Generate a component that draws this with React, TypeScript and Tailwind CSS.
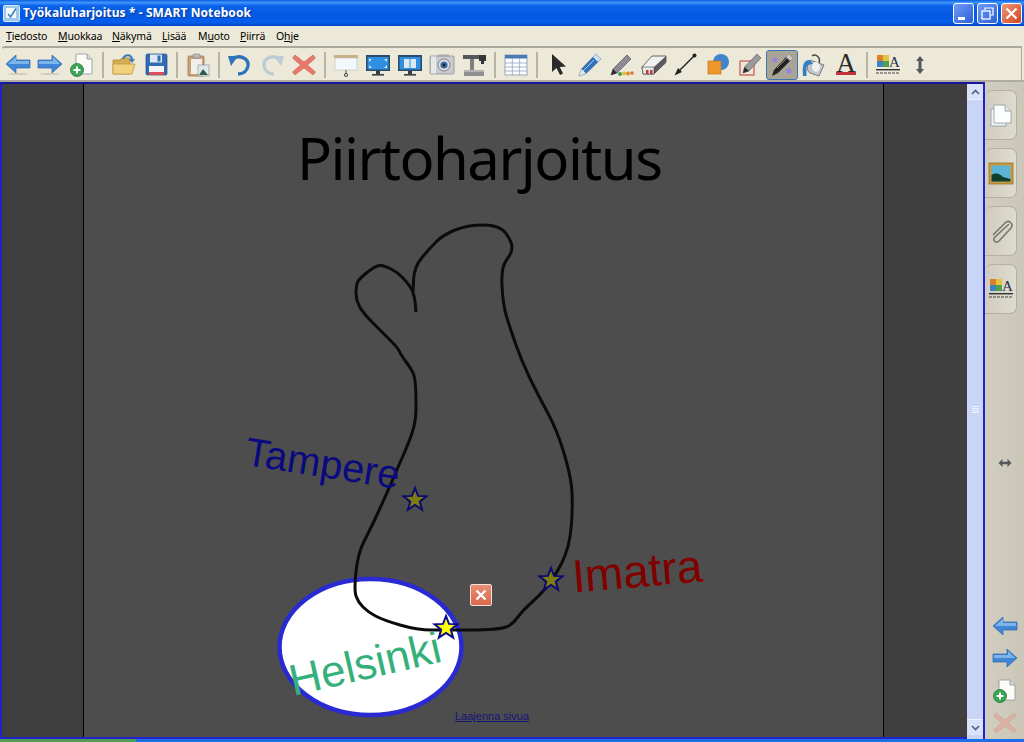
import type { ReactNode } from "react";

const ui = "font-['Noto_Sans','Liberation_Sans',sans-serif]";
const arial = "font-['Liberation_Sans',Arial,sans-serif]";

const outline: [number, number][] = [
  [416, 312], [415, 295], [408, 283], [397, 272], [385, 266], [378, 265], [370, 270], [358, 280],
  [356, 287], [356, 300], [363, 313], [382, 332], [398, 348], [401, 355], [412, 370], [415, 378],
  [416, 395], [416, 420], [410, 440], [398, 467], [387, 493], [370, 530], [358, 553], [354, 590],
  [358, 602], [368, 612], [383, 620], [417, 630], [447, 630], [478, 630], [500, 629], [512, 625],
  [523, 610], [537, 598], [553, 580], [570, 547], [573, 500], [570, 473], [557, 430], [538, 395],
  [522, 362], [510, 328], [503, 305], [501, 267], [512, 253], [512, 242], [500, 225], [467, 225],
  [443, 235], [430, 248], [414, 267], [413, 293],
];

// smooth line through the hand drawn points
function smooth(pts: [number, number][]) {
  let d = `M${pts[0][0]} ${pts[0][1]}`;
  for (let i = 1; i < pts.length - 1; i++) {
    const mx = (pts[i][0] + pts[i + 1][0]) / 2;
    const my = (pts[i][1] + pts[i + 1][1]) / 2;
    d += ` Q${pts[i][0]} ${pts[i][1]} ${mx} ${my}`;
  }
  const last = pts[pts.length - 1];
  return d + ` L${last[0]} ${last[1]}`;
}

function starPoints(cx: number, cy: number, r: number) {
  const out: string[] = [];
  for (let i = 0; i < 10; i++) {
    const rad = i % 2 === 0 ? r : r * 0.42;
    const a = -Math.PI / 2 + (i * Math.PI) / 5;
    out.push(`${(cx + rad * Math.cos(a)).toFixed(1)},${(cy + rad * Math.sin(a)).toFixed(1)}`);
  }
  return out.join(" ");
}

function Icon({ children, size = 26 }: { children: ReactNode; size?: number }) {
  return (
    <svg width={size} height={size} viewBox="0 0 26 26" className="block">
      {children}
    </svg>
  );
}

const ArrowLeft = () => (
  <Icon>
    <ellipse cx="13" cy="22" rx="10" ry="1" fill="#cfccbc" />
    <path d="M1 12 L11 3 L11 8 L25 8 L25 16 L11 16 L11 21 Z" fill="#3f86d6" stroke="#2f66ad" strokeWidth="0.7" />
    <path d="M3 12 L11 5 L11 9 L24 9 L24 12 Z" fill="#7db4ea" />
  </Icon>
);
const ArrowRight = () => (
  <Icon>
    <ellipse cx="13" cy="22" rx="10" ry="1" fill="#cfccbc" />
    <path d="M25 12 L15 3 L15 8 L1 8 L1 16 L15 16 L15 21 Z" fill="#3f86d6" stroke="#2f66ad" strokeWidth="0.7" />
    <path d="M2 9 L16 9 L16 5 L23 12 L2 12 Z" fill="#7db4ea" />
  </Icon>
);
const NewPage = () => (
  <Icon>
    <path d="M7 2 H18 L23 7 V22 H7 Z" fill="#fbfbf8" stroke="#8d9299" strokeWidth="0.8" />
    <path d="M18 2 V7 H23" fill="#d8dbe0" stroke="#8d9299" strokeWidth="0.8" />
    <circle cx="8" cy="18" r="6.5" fill="#3aa655" stroke="#24753a" strokeWidth="0.8" />
    <path d="M8 14.5 V21.5 M4.5 18 H11.5" stroke="#fff" strokeWidth="2" />
  </Icon>
);
const OpenFolder = () => (
  <Icon>
    <path d="M2 8 H9 L11 6 H19 V22 H2 Z" fill="#d9ae52" stroke="#a98535" strokeWidth="0.7" />
    <path d="M2 12 H24 L21 22 H2 Z" fill="#f2d27f" stroke="#b8943f" strokeWidth="0.7" />
    <path d="M12 7 C14 2 20 2 21 7" fill="none" stroke="#3d79b8" strokeWidth="2" />
    <path d="M18 7 L24 7 L21 11 Z" fill="#3d79b8" />
  </Icon>
);
const Save = () => (
  <Icon>
    <rect x="3" y="2" width="21" height="21" rx="1.5" fill="#2f6cb5" stroke="#244f8a" strokeWidth="0.7" />
    <rect x="7" y="2.5" width="12" height="8" fill="#dfe7f2" />
    <rect x="14.5" y="3.5" width="3" height="6" fill="#2f6cb5" />
    <rect x="6" y="14" width="15" height="9" fill="#f4f4f4" />
    <rect x="6" y="20" width="15" height="3" fill="#d8505c" />
  </Icon>
);
const Paste = () => (
  <Icon>
    <rect x="3" y="4" width="16" height="20" rx="1" fill="#c9a377" stroke="#93714a" strokeWidth="0.7" />
    <rect x="6" y="7" width="11" height="15" fill="#f2f0ea" />
    <rect x="8" y="2" width="7" height="4" rx="1" fill="#b9bcb9" stroke="#7f8280" strokeWidth="0.6" />
    <rect x="13" y="13" width="11" height="11" fill="#dfe9ee" stroke="#7f8c92" strokeWidth="0.6" />
    <path d="M14 23 L18 17 L23 23 Z" fill="#2d5f4a" />
  </Icon>
);
const Undo = () => (
  <Icon>
    <path d="M5 7 C12 2 22 6 21 14 C20 19 16 22 11 22" fill="none" stroke="#2f73b8" strokeWidth="3.4" />
    <path d="M1 4 L11 4 L4 14 Z" fill="#2f73b8" />
  </Icon>
);
const Redo = () => (
  <Icon>
    <path d="M21 7 C14 2 4 6 5 14 C6 19 10 22 15 22" fill="none" stroke="#bccdd6" strokeWidth="3.4" />
    <path d="M25 4 L15 4 L22 14 Z" fill="#bccdd6" />
  </Icon>
);
const RedX = ({ faded = false }: { faded?: boolean }) => (
  <Icon>
    <path
      d="M4 3 L13 10 L22 3 L24.5 6 L16.5 13 L24.5 20 L22 23 L13 16 L4 23 L1.5 20 L9.5 13 L1.5 6 Z"
      fill={faded ? "#d9b0a2" : "#e8796a"}
      stroke={faded ? "#cfa596" : "#cf5f52"}
      strokeWidth="0.6"
    />
  </Icon>
);
const ProjectorScreen = () => (
  <Icon>
    <rect x="1" y="3" width="24" height="3" fill="#c9b084" />
    <rect x="2" y="6" width="22" height="12" fill="#f3f8fc" stroke="#b9bdb9" strokeWidth="0.6" />
    <path d="M13 18 V21" stroke="#555" strokeWidth="1" />
    <circle cx="13" cy="23" r="1.6" fill="none" stroke="#444" strokeWidth="1" />
  </Icon>
);
const Monitor = ({ book = false }: { book?: boolean }) => (
  <Icon>
    <rect x="1" y="3" width="24" height="16" fill="#2e4a68" />
    <rect x="2.5" y="5" width="21" height="12.5" fill="#2f8fe0" />
    {book ? (
      <path d="M7 7 H12.5 V16 H7 Z M13.5 7 H19 V16 H13.5 Z" fill="#dfe9f3" />
    ) : (
      <path d="M4 7 L7 7 L4 10 Z M22 7 L19 7 L22 10 Z M4 16 L7 16 L4 13 Z M22 16 L19 16 L22 13 Z" fill="#cfe7fa" />
    )}
    <rect x="11" y="19" width="4" height="3" fill="#3a3f45" />
    <rect x="7" y="22" width="12" height="1.6" fill="#3a3f45" />
  </Icon>
);
const Camera = () => (
  <Icon>
    <rect x="1" y="4" width="24" height="18" rx="1" fill="#c9cbce" stroke="#85878a" strokeWidth="0.7" />
    <rect x="2" y="4.5" width="5" height="17" fill="#e6e7e8" />
    <rect x="9" y="2.5" width="11" height="2" fill="#a8aaad" />
    <circle cx="15" cy="13" r="6" fill="#dcdfe3" stroke="#6f7174" strokeWidth="0.8" />
    <circle cx="15" cy="13" r="3.6" fill="#3c6ea3" />
    <circle cx="15" cy="13" r="1.5" fill="#10202f" />
  </Icon>
);
const DocCamera = () => (
  <Icon>
    <path d="M2 3 H21 V7 H2 Z" fill="#55585a" />
    <rect x="18" y="3" width="7" height="6" fill="#343638" />
    <rect x="20" y="9" width="3" height="3" fill="#343638" />
    <rect x="9" y="7" width="4" height="12" fill="#7c7f80" />
    <rect x="3" y="18" width="20" height="6" rx="1" fill="#8d908f" />
    <rect x="3" y="18" width="20" height="2" fill="#b2b4b3" />
  </Icon>
);
const Table = () => (
  <Icon>
    <rect x="2" y="3" width="22" height="20" fill="#fdfdfd" stroke="#7f93ad" strokeWidth="0.8" />
    <rect x="2" y="3" width="22" height="3.5" fill="#4a7ab5" />
    <path d="M2 11 H24 M2 15 H24 M2 19 H24 M9.3 6 V23 M16.6 6 V23" stroke="#8ea7c6" strokeWidth="0.8" />
  </Icon>
);
const Pointer = () => (
  <Icon>
    <path d="M7 2 L7 20 L11.5 16 L15 23 L18 21.5 L14.8 15 L21 14.5 Z" fill="#2a2a2c" />
  </Icon>
);
const Pen = () => (
  <Icon>
    <path d="M2 24 L4.5 17 L19 2 L24 7 L9 21.5 Z" fill="#3272bd" stroke="#245a9c" strokeWidth="0.6" />
    <path d="M16 5 L21 10 L24 7 L19 2 Z" fill="#cfe0f2" />
    <path d="M2 24 L4.5 17 L9 21.5 Z" fill="#e7e7e4" />
    <path d="M6 19 L17 8" stroke="#a9cdf0" strokeWidth="1" />
  </Icon>
);
const CreativePen = () => (
  <Icon>
    <path d="M2 23 L4 17 L18 3 L22 7 L8 21 Z" fill="#8d8a96" stroke="#55525c" strokeWidth="0.7" />
    <path d="M2 23 L4 17 L8 21 Z" fill="#2d2d30" />
    <circle cx="11" cy="22" r="2" fill="#3d9f53" />
    <circle cx="15" cy="21.5" r="2" fill="#d8c23e" />
    <circle cx="19" cy="21.5" r="2" fill="#e28b2f" />
    <circle cx="23" cy="21" r="1.7" fill="#d86d2d" />
  </Icon>
);
const Eraser = () => (
  <Icon>
    <path d="M1 15 L11 4 L25 4 L25 10 L13 22 L2 22 Z" fill="#f0f0ee" stroke="#444" strokeWidth="0.8" />
    <path d="M13 15 L25 4 V11 L13 22 Z" fill="#5a5a5c" />
    <path d="M1 15 H13 V22 H2 Z" fill="#e9e9e7" stroke="#444" strokeWidth="0.6" />
    <rect x="5" y="18" width="2.5" height="4" fill="#bb3a40" />
    <rect x="9" y="18" width="2.5" height="4" fill="#bb3a40" />
  </Icon>
);
const Line = () => (
  <Icon>
    <path d="M4 21 L21 4" stroke="#222" strokeWidth="1.5" />
    <path d="M1.5 23.5 L9 20 L5 16 Z" fill="#222" />
    <circle cx="21.5" cy="3.5" r="2" fill="#222" />
  </Icon>
);
const Shapes = () => (
  <Icon>
    <circle cx="16" cy="10" r="8" fill="#3f86cf" />
    <rect x="3" y="9" width="13" height="13" fill="#ef962d" stroke="#c9751c" strokeWidth="0.7" />
  </Icon>
);
const ShapePen = () => (
  <Icon>
    <rect x="3" y="9" width="14" height="14" fill="none" stroke="#cf5d5d" strokeWidth="1.3" />
    <path d="M6 21 L7.5 15 L20 2 L24 6 L12 19 Z" fill="#9b9a9a" stroke="#555" strokeWidth="0.6" />
    <path d="M6 21 L7.5 15 L12 19 Z" fill="#2f2f31" />
  </Icon>
);
const MagicPen = () => (
  <Icon>
    <path d="M3 24 L5 18 L20 2 L24 6 L9 21 Z" fill="#222" />
    <path d="M17 5 L21 9 L24 6 L20 2 Z" fill="#c8c8c8" />
    <path d="M8 16 L18 6" stroke="#888" strokeWidth="1" />
    <polygon points={starPoints(6, 8, 4)} fill="#9a7fe6" />
    <polygon points={starPoints(20, 19, 4)} fill="#9a7fe6" />
  </Icon>
);
const Fill = () => (
  <Icon>
    <path d="M9 8 L23 13 L18 24 L9 21 C5 19 6 12 9 8 Z" fill="#c3c6c9" stroke="#55585a" strokeWidth="0.7" />
    <path d="M11 4 C15 1 20 6 18 11" fill="none" stroke="#444" strokeWidth="1.4" />
    <path d="M9 8 C3 8 1 12 2 24 H5.5 V15 C6 13 9 12 12 12 Z" fill="#2f7fc4" />
    <ellipse cx="15" cy="15" rx="4" ry="5" fill="#eef0f1" />
  </Icon>
);
const TextA = () => (
  <div className="flex h-[26px] w-[26px] flex-col items-center">
    <span className="block h-[21px] font-['Liberation_Serif',serif] text-[27px] leading-[23px] text-[#2a2a2a]">A</span>
    <div className="mt-[-1px] h-[3px] w-[20px] bg-[#c0313a]" />
  </div>
);
const Properties = () => (
  <Icon>
    <rect x="2" y="3" width="6" height="6" fill="#d9822b" />
    <rect x="8" y="3" width="6" height="6" fill="#e3c53f" />
    <rect x="2" y="9" width="6" height="6" fill="#3f7fc4" />
    <rect x="8" y="9" width="6" height="6" fill="#4fa04f" />
    <text x="19.5" y="15" textAnchor="middle" fontFamily="Liberation Serif, serif" fontSize="15" fill="#1f2f4f">
      A
    </text>
    <rect x="1" y="17" width="24" height="1.4" fill="#333" />
    <path d="M1 21 H25" stroke="#444" strokeWidth="1.2" strokeDasharray="3 1" />
  </Icon>
);
const MoveV = () => (
  <Icon>
    <path d="M13 4 L17 9 H14.5 V17 H17 L13 22 L9 17 H11.5 V9 H9 Z" fill="#55585c" />
  </Icon>
);
const Clip = () => (
  <Icon>
    <path
      d="M21 5 L7 18 C4 21 8 25 11 22 L23 9 C26 5 21 0 17 4 L5 16"
      fill="none"
      stroke="#77766f"
      strokeWidth="1.6"
      transform="translate(0 1)"
    />
  </Icon>
);
const Gallery = () => (
  <Icon>
    <rect x="1" y="3" width="24" height="21" fill="#c99a3a" stroke="#8a6a24" strokeWidth="0.7" />
    <rect x="3.5" y="5.5" width="19" height="16" fill="#5db4d6" />
    <path d="M3.5 21.5 V15 C8 12 12 14 15 17 C18 18 20 18 22.5 19 V21.5 Z" fill="#12402a" />
  </Icon>
);
const Pages = () => (
  <Icon>
    <rect x="3" y="7" width="15" height="17" fill="#eef3f3" stroke="#8d9a9d" strokeWidth="0.8" />
    <path d="M6 3 H17 L23 9 V21 H6 Z" fill="#fcfdfd" stroke="#8d9a9d" strokeWidth="0.8" />
    <path d="M17 3 V9 H23" fill="#dfe5e8" stroke="#8d9a9d" strokeWidth="0.8" />
  </Icon>
);

const Sep = () => (
  <div className="flex w-[10px] justify-center">
    <div className="h-[26px] w-[2px] bg-[#b5b3a6]" />
  </div>
);

function Btn({ children, active = false }: { children: ReactNode; active?: boolean }) {
  return (
    <div
      className={
        active
          ? "flex h-[30px] w-8 items-center justify-center rounded-[3px] border border-[#3c76b5] bg-[#a8a595]"
          : "flex h-[30px] w-8 items-center justify-center"
      }
    >
      {children}
    </div>
  );
}

function SideTab({ children }: { children: ReactNode }) {
  return (
    <div className="flex h-[50px] w-[32px] items-center justify-center rounded-r-[7px] rounded-tl-[7px] border border-l-0 border-[#b3afa1] bg-[linear-gradient(90deg,#d0ccbf,#dedbcf)]">
      {children}
    </div>
  );
}

const menus = [
  { pre: "", u: "T", post: "iedosto", w: "w-[52px]" },
  { pre: "", u: "M", post: "uokkaa", w: "w-[54px]" },
  { pre: "", u: "N", post: "äkymä", w: "w-[50px]" },
  { pre: "", u: "L", post: "isää", w: "w-[36px]" },
  { pre: "M", u: "u", post: "oto", w: "w-[42px]" },
  { pre: "", u: "P", post: "iirrä", w: "w-[36px]" },
  { pre: "O", u: "h", post: "je", w: "w-[36px]" },
];

export default function App() {
  return (
    <div className={`flex h-[742px] w-[1024px] flex-col overflow-hidden bg-[#ece9d8] ${ui}`}>
      {/* Title bar */}
      <div className="flex h-[26px] shrink-0 items-center bg-[linear-gradient(180deg,#0a5ee0_0%,#3f95fb_10%,#0b63ea_22%,#0458e2_60%,#0560ee_85%,#0044c4_100%)] pl-[3px] pr-[2px]">
        <svg width="17" height="17" viewBox="0 0 17 17" className="shrink-0">
          <rect x="0.5" y="0.5" width="16" height="16" rx="1" fill="#9cc8ee" stroke="#dceaf7" />
          <rect x="3" y="3" width="10" height="10" fill="#f3f8fc" />
          <path d="M5 9 L7.5 12 L13 3.5" fill="none" stroke="#3f7fb8" strokeWidth="1.6" />
        </svg>
        <span className="ml-[3px] text-[12px] font-bold leading-none tracking-[0.1px] text-white [text-shadow:1px_1px_1px_#0b3a9c]">
          Työkaluharjoitus * - SMART Notebook
        </span>
        <div className="ml-auto flex gap-[3px]">
          <div className="flex h-[21px] w-[21px] items-end rounded-[3px] border border-white bg-[linear-gradient(135deg,#6f9cf3,#2a5fdc)] pb-[3px] pl-[4px]">
            <div className="h-[3px] w-[7px] bg-white" />
          </div>
          <div className="flex h-[21px] w-[21px] items-center justify-center rounded-[3px] border border-white bg-[linear-gradient(135deg,#6f9cf3,#2a5fdc)]">
            <svg width="13" height="13" viewBox="0 0 13 13">
              <path d="M4 3 V1 H12 V8 H9.5" fill="none" stroke="#fff" strokeWidth="1.2" />
              <rect x="1" y="4" width="8" height="8" fill="none" stroke="#fff" strokeWidth="1.3" />
            </svg>
          </div>
          <div className="flex h-[21px] w-[21px] items-center justify-center rounded-[3px] border border-white bg-[linear-gradient(135deg,#ea9a7c,#d5431d)]">
            <svg width="13" height="13" viewBox="0 0 13 13">
              <path d="M1.5 1.5 L11.5 11.5 M11.5 1.5 L1.5 11.5" stroke="#fff" strokeWidth="2.2" />
            </svg>
          </div>
        </div>
      </div>

      {/* Menu */}
      <div className="flex h-[20px] shrink-0 items-center pl-[6px] text-[10.5px] leading-none tracking-[-0.15px] text-black">
        {menus.map((m) => (
          <div key={m.pre + m.u + m.post} className={m.w}>
            {m.pre}
            <span className="underline">{m.u}</span>
            {m.post}
          </div>
        ))}
      </div>

      {/* Toolbar */}
      <div className="ml-[2px] mr-[2px] flex h-[34px] shrink-0 items-center rounded-l-[3px] border-t-2 border-r border-[#a9a89c] pt-[1px]">
        <Btn><ArrowLeft /></Btn>
        <Btn><ArrowRight /></Btn>
        <Btn><NewPage /></Btn>
        <Sep />
        <Btn><OpenFolder /></Btn>
        <Btn><Save /></Btn>
        <Sep />
        <Btn><Paste /></Btn>
        <Sep />
        <Btn><Undo /></Btn>
        <Btn><Redo /></Btn>
        <Btn><RedX /></Btn>
        <Sep />
        <Btn><ProjectorScreen /></Btn>
        <Btn><Monitor /></Btn>
        <Btn><Monitor book /></Btn>
        <Btn><Camera /></Btn>
        <Btn><DocCamera /></Btn>
        <Sep />
        <Btn><Table /></Btn>
        <Sep />
        <Btn><Pointer /></Btn>
        <Btn><Pen /></Btn>
        <Btn><CreativePen /></Btn>
        <Btn><Eraser /></Btn>
        <Btn><Line /></Btn>
        <Btn><Shapes /></Btn>
        <Btn><ShapePen /></Btn>
        <Btn active><MagicPen /></Btn>
        <Btn><Fill /></Btn>
        <Btn><TextA /></Btn>
        <Sep />
        <Btn><Properties /></Btn>
        <Btn><MoveV /></Btn>
      </div>
      <div className="h-[2px] shrink-0 bg-[#aeaca0]" />

      {/* Workspace */}
      <div className="flex min-h-0 flex-1">
        <div className="flex min-w-0 flex-1 border-b-2 border-l-2 border-t-2 border-[#2222c8] border-t-[#16169a]">
          <div className="w-[81px] shrink-0 bg-[#3f3f3f]" />
          <div className="relative w-[801px] shrink-0 overflow-hidden border-x border-black bg-[#4d4d4d]">
            <div className="absolute left-[213px] top-[30px] text-[58px] leading-[88px] tracking-[-1.5px] text-black">
              Piirtoharjoitus
            </div>
            <svg className="absolute left-0 top-0" width="799" height="654" viewBox="84 84 799 654">
              <polygon points="295,686 303,690 298,695" fill="#1c4a58" />
              <ellipse cx="370.5" cy="647" rx="91" ry="68" fill="#fff" stroke="#2a2ad2" strokeWidth="4.5" />
              <path d={smooth(outline)} fill="none" stroke="#0b0b0b" strokeWidth="3" strokeLinejoin="round" />
              <polygon points={starPoints(415, 500, 12)} fill="#7c7c10" stroke="#0b0b70" strokeWidth="2" />
              <polygon points={starPoints(551, 580, 12)} fill="#7c7c10" stroke="#0b0b70" strokeWidth="2" />
              <polygon points={starPoints(446, 628, 12)} fill="#ffff00" stroke="#0b0b8c" strokeWidth="2" />
            </svg>
            <div className={`absolute left-[161px] top-[356px] origin-center rotate-[9deg] whitespace-nowrap text-[40px] leading-[46px] text-[#0a0a80] ${arial}`}>
              Tampere
            </div>
            <div className={`absolute left-[488px] top-[461px] rotate-[-5deg] whitespace-nowrap text-[46px] leading-[52px] text-[#800000] ${arial}`}>
              Imatra
            </div>
            <div className={`absolute left-[204px] top-[555px] rotate-[-13deg] whitespace-nowrap text-[44px] leading-[50px] text-[#36b07a] ${arial}`}>
              Helsinki
            </div>
            <div className="absolute left-[386px] top-[500px] flex h-[22px] w-[22px] items-center justify-center rounded-[2px] border border-[#f3e3dc] bg-[linear-gradient(180deg,#e88d72,#d9694c)]">
              <svg width="14" height="14" viewBox="0 0 14 14">
                <path d="M2.5 2.5 L11.5 11.5 M11.5 2.5 L2.5 11.5" stroke="#fff" strokeWidth="2.4" />
              </svg>
            </div>
            <div className={`absolute left-[371px] top-[625px] text-[11px] leading-[14px] text-[#14147a] underline ${arial}`}>
              Laajenna sivua
            </div>
          </div>
          <div className="min-w-0 flex-1 bg-[#3f3f3f]" />
        </div>

        {/* Scrollbar */}
        <div className="flex w-[18px] shrink-0 flex-col border-r-2 border-t-2 border-[#2222c8] border-t-[#16169a] bg-[#c9d5f7] pb-[4px]">
          <div className="flex h-[15px] items-center justify-center rounded-[2px] bg-[#d9e2fb]">
            <svg width="9" height="6" viewBox="0 0 9 6">
              <path d="M1 5 L4.5 1.5 L8 5" fill="none" stroke="#4d6185" strokeWidth="1.6" />
            </svg>
          </div>
          <div className="flex flex-1 flex-col items-center justify-center gap-[1px] border-y border-[#eef2fd]">
            <div className="h-[1px] w-[7px] bg-[#eef2fd]" />
            <div className="h-[1px] w-[7px] bg-[#eef2fd]" />
            <div className="h-[1px] w-[7px] bg-[#eef2fd]" />
            <div className="h-[1px] w-[7px] bg-[#eef2fd]" />
          </div>
          <div className="flex h-[15px] items-center justify-center rounded-[2px] bg-[#d9e2fb]">
            <svg width="9" height="6" viewBox="0 0 9 6">
              <path d="M1 1 L4.5 4.5 L8 1" fill="none" stroke="#4d6185" strokeWidth="1.6" />
            </svg>
          </div>
        </div>

        {/* Side tabs */}
        <div className="flex w-[39px] shrink-0 flex-col bg-[linear-gradient(90deg,#d2cebf,#cbc7b8)] pt-[8px]">
          <div className="flex flex-col gap-[8px]">
            <SideTab><Pages /></SideTab>
            <SideTab><Gallery /></SideTab>
            <SideTab><Clip /></SideTab>
            <SideTab><Properties /></SideTab>
          </div>
          <div className="mt-[144px] flex justify-center">
            <svg width="14" height="10" viewBox="0 0 14 10">
              <path d="M0.5 5 L4.5 1 V3.8 H9.5 V1 L13.5 5 L9.5 9 V6.2 H4.5 V9 Z" fill="#55585c" />
            </svg>
          </div>
          <div className="mt-auto flex flex-col items-center gap-[6px] pb-[3px]">
            <ArrowLeft />
            <ArrowRight />
            <NewPage />
            <RedX faded />
          </div>
        </div>
      </div>

      {/* Bottom edge of the window */}
      <div className="flex h-[3px] shrink-0">
        <div className="w-[136px] bg-[#4f9f57]" />
        <div className="flex-1 bg-[#1c6fe8]" />
      </div>
    </div>
  );
}
